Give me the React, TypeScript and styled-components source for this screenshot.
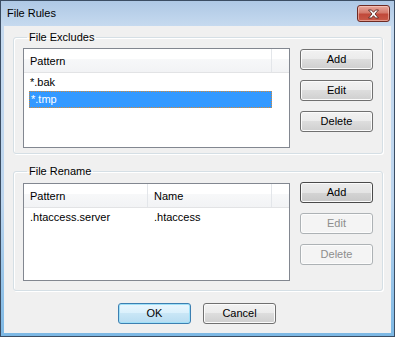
import React from "react";
import styled, { createGlobalStyle, css } from "styled-components";

const GlobalStyle = createGlobalStyle`
  html, body {
    margin: 0;
    padding: 0;
    background: #ffffff;
  }
  body {
    font-family: "Liberation Sans", Arial, sans-serif;
    font-size: 11px;
    font-weight: 400;
  }
`;

const Window = styled.div`
  box-sizing: border-box;
  width: 395px;
  height: 337px;
  display: flex;
  flex-direction: column;
  padding: 0 3px 3px 3px;
  border: 1px solid #3b4d63;
  background: linear-gradient(to bottom, #aec8e5 0px, #c6daef 25px, #bcd5ee 60%, #7db8e4 100%);
`;

const TitleBar = styled.div`
  height: 25px;
  display: flex;
  align-items: flex-start;
  justify-content: space-between;
  padding: 0 1px 0 3px;
`;

const Title = styled.span`
  margin-top: 6px;
  font-size: 11px;
  line-height: 13px;
  color: #000000;
`;

const CloseButton = styled.div`
  box-sizing: border-box;
  width: 33px;
  height: 17px;
  margin-top: 4px;
  border: 1px solid #6e2a23;
  border-radius: 3px;
  display: flex;
  align-items: center;
  justify-content: center;
  background: linear-gradient(to bottom, #e8a699 0%, #d47a6c 45%, #c0493a 55%, #c95a48 100%);
  box-shadow: inset 0 0 0 1px rgba(255, 220, 210, 0.5);
`;

const Client = styled.div`
  flex: 1;
  display: flex;
  flex-direction: column;
  background: #f0f0f0;
  padding: 4px 8px 0 9px;
`;

const Group = styled.fieldset<{ $gap: number; $bottom: number }>`
  margin: ${(p) => p.$gap}px 0 0 0;
  padding: 4px 9px ${(p) => p.$bottom}px 9px;
  border: 1px solid #d5dfe5;
  border-radius: 3px;
  box-shadow: inset 1px 1px 0 #ffffff, 1px 1px 0 #ffffff;
`;

const Legend = styled.legend`
  margin-left: 4px;
  padding: 0 2px;
  line-height: 14px;
  font-size: 11px;
  font-weight: 400;
  color: #000000;
`;

const GroupBody = styled.div`
  display: flex;
  align-items: flex-start;
  gap: 10px;
`;

const ListView = styled.div<{ $height: number; $top: number }>`
  box-sizing: border-box;
  width: 267px;
  height: ${(p) => p.$height}px;
  margin-top: ${(p) => p.$top}px;
  border: 1px solid #828790;
  background: #ffffff;
  display: flex;
  flex-direction: column;
`;

const Header = styled.div`
  display: flex;
  height: 23px;
  border-bottom: 1px solid #e2e3e5;
  background: linear-gradient(to bottom, #ffffff 0%, #ffffff 45%, #f7f8f9 45%, #f2f3f5 100%);
`;

const HeaderCell = styled.div<{ $width?: number }>`
  box-sizing: border-box;
  ${(p) =>
    p.$width
      ? css`
          width: ${p.$width}px;
          border-right: 1px solid #e3e6ea;
        `
      : css`
          flex: 1;
        `}
  padding: 5px 0 0 6px;
  line-height: 14px;
  color: #000000;
`;

const Body = styled.div`
  padding-top: 1px;
`;

const Row = styled.div`
  display: flex;
  height: 17px;
`;

const Cell = styled.div<{ $width: number }>`
  box-sizing: border-box;
  width: ${(p) => p.$width}px;
  padding-left: 5px;
  display: flex;
`;

const ItemLabel = styled.span<{ $selected?: boolean }>`
  box-sizing: border-box;
  padding-left: 1px;
  line-height: 17px;
  color: #000000;
  ${(p) =>
    p.$selected &&
    css`
      flex: 1;
      padding-left: 2px;
      background: #3399ff;
      color: #ffffff;
      outline: 1px dotted #d08a3a;
      outline-offset: -1px;
    `}
`;

const ButtonColumn = styled.div<{ $top: number }>`
  display: flex;
  flex-direction: column;
  gap: 10px;
  margin-top: ${(p) => p.$top}px;
`;

const Button = styled.button<{ $variant?: "normal" | "disabled" | "focus" | "default" }>`
  box-sizing: border-box;
  width: 73px;
  height: 21px;
  padding: 0;
  border-radius: 3px;
  font-family: "Liberation Sans", Arial, sans-serif;
  font-size: 11px;
  font-weight: 400;
  line-height: 19px;
  color: #000000;
  border: 1px solid #707070;
  background: linear-gradient(to bottom, #f2f2f2 0%, #ebebeb 50%, #dddddd 50%, #cfcfcf 100%);
  box-shadow: inset 0 0 0 1px #fbfbfb;
  ${(p) =>
    p.$variant === "disabled" &&
    css`
      border-color: #adb2b5;
      background: #f4f4f4;
      color: #8d8d8d;
      box-shadow: inset 0 0 0 1px #fcfcfc;
    `}
  ${(p) =>
    p.$variant === "focus" &&
    css`
      border-color: #4a4a4a;
      background: linear-gradient(to bottom, #ececec 0%, #e4e4e4 50%, #d4d4d4 50%, #c8c8c8 100%);
    `}
  ${(p) =>
    p.$variant === "default" &&
    css`
      border-color: #3c7fb1;
      background: linear-gradient(to bottom, #eaf6fd 0%, #d9f0fc 50%, #c9e6f6 50%, #b7dcf1 100%);
      box-shadow: inset 0 0 0 1px #9fe0f8;
    `}
`;

const Footer = styled.div`
  display: flex;
  justify-content: center;
  gap: 12px;
  margin-top: 12px;
  padding-right: 2px;
`;

function CloseGlyph() {
  return (
    <svg width="13" height="10" viewBox="0 0 13 10">
      <path
        d="M1.5 1 L4.5 1 L6.5 3.3 L8.5 1 L11.5 1 L8 5 L11.5 9 L8.5 9 L6.5 6.7 L4.5 9 L1.5 9 L5 5 Z"
        fill="#ffffff"
        stroke="#5a2a26"
        strokeWidth="0.9"
        strokeLinejoin="round"
      />
    </svg>
  );
}

export default function App() {
  return (
    <>
      <GlobalStyle />
      <Window>
        <TitleBar>
          <Title>File Rules</Title>
          <CloseButton>
            <CloseGlyph />
          </CloseButton>
        </TitleBar>
        <Client>
          <Group $gap={0} $bottom={5}>
            <Legend>File Excludes</Legend>
            <GroupBody>
              <ListView $height={100} $top={0}>
                <Header>
                  <HeaderCell $width={248}>Pattern</HeaderCell>
                  <HeaderCell />
                </Header>
                <Body>
                  <Row>
                    <Cell $width={248}>
                      <ItemLabel>*.bak</ItemLabel>
                    </Cell>
                  </Row>
                  <Row>
                    <Cell $width={248}>
                      <ItemLabel $selected>*.tmp</ItemLabel>
                    </Cell>
                  </Row>
                </Body>
              </ListView>
              <ButtonColumn $top={1}>
                <Button>Add</Button>
                <Button>Edit</Button>
                <Button>Delete</Button>
              </ButtonColumn>
            </GroupBody>
          </Group>
          <Group $gap={10} $bottom={9}>
            <Legend>File Rename</Legend>
            <GroupBody>
              <ListView $height={98} $top={1}>
                <Header>
                  <HeaderCell $width={124}>Pattern</HeaderCell>
                  <HeaderCell $width={124}>Name</HeaderCell>
                  <HeaderCell />
                </Header>
                <Body>
                  <Row>
                    <Cell $width={124}>
                      <ItemLabel>.htaccess.server</ItemLabel>
                    </Cell>
                    <Cell $width={124}>
                      <ItemLabel>.htaccess</ItemLabel>
                    </Cell>
                  </Row>
                </Body>
              </ListView>
              <ButtonColumn $top={0}>
                <Button $variant="focus">Add</Button>
                <Button $variant="disabled">Edit</Button>
                <Button $variant="disabled">Delete</Button>
              </ButtonColumn>
            </GroupBody>
          </Group>
          <Footer>
            <Button $variant="default">OK</Button>
            <Button>Cancel</Button>
          </Footer>
        </Client>
      </Window>
    </>
  );
}
